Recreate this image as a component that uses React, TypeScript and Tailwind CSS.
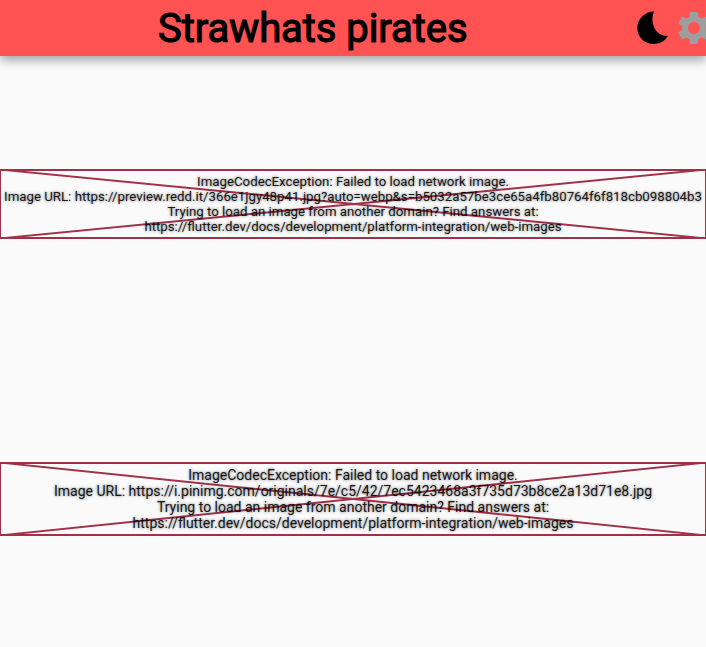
import { MdSettings } from "react-icons/md";

function Cross({ height }: { height: number }) {
  return (
    <svg
      className="absolute inset-0"
      width="706"
      height={height}
      viewBox={`0 0 706 ${height}`}
      fill="none"
      stroke="#a13049"
      strokeWidth="2"
    >
      <path d={`M0 0.6L706 ${height - 0.6}M706 0.6L0 ${height - 0.6}`} />
      <rect x="0" y="1" width="706" height={height - 2} />
    </svg>
  );
}

function ImageError({ url, height, textClass }: { url: string; height: number; textClass: string }) {
  return (
    <div className="relative flex w-full items-center justify-center" style={{ height }}>
      <Cross height={height} />
      <div
        className={`relative text-center whitespace-nowrap text-black/90 [text-shadow:0_0_3px_rgba(0,0,0,0.6)] ${textClass}`}
      >
        <p>ImageCodecException: Failed to load network image.</p>
        <p>Image URL: {url}</p>
        <p>Trying to load an image from another domain? Find answers at:</p>
        <p>https://flutter.dev/docs/development/platform-integration/web-images</p>
      </div>
    </div>
  );
}

export default function App() {
  return (
    <div className="flex h-[647px] w-[706px] flex-col overflow-hidden bg-[#fafafa] font-[Roboto,sans-serif]">
      <header className="flex h-14 shrink-0 items-center bg-[#ff5252] shadow-[0_4px_10px_rgba(0,0,0,0.36)]">
        <h1 className="ml-[158px] w-[479px] shrink-0 pt-0.5 text-[40px] leading-[56px] font-normal tracking-[-0.06px] whitespace-nowrap text-black [-webkit-text-stroke:1.2px_black]">
          Strawhats pirates
        </h1>
        <svg className="shrink-0" width="32" height="34" viewBox="0 0 32 34">
          <path
            d="M17 0.4C15.4 4 15 8 15.8 12C17.4 19.5 22 25 30.8 25.1C28 30.2 22.6 33.1 16.6 33.1C7.6 33.1 0.3 26 0.3 17C0.3 8 7.6 0.4 17 0.4Z"
            fill="#000"
          />
        </svg>
        <MdSettings className="ml-[5px] shrink-0" size={40} color="#9e9e9e" />
      </header>
      <main className="flex flex-col pt-[113px]">
        <ImageError
          url="https://preview.redd.it/366e1jgy48p41.jpg?auto=webp&s=b5032a57be3ce65a4fb80764f6f818cb098804b3"
          height={70}
          textClass="text-[13.26px] leading-[15px]"
        />
        <div className="h-[223px]" />
        <ImageError
          url="https://i.pinimg.com/originals/7e/c5/42/7ec5423468a3f735d73b8ce2a13d71e8.jpg"
          height={74}
          textClass="text-[14px] leading-4"
        />
      </main>
    </div>
  );
}
